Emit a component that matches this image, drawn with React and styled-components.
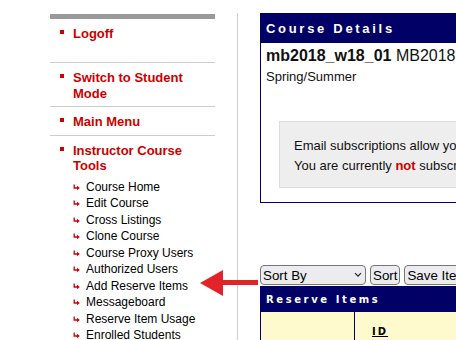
import React from 'react';
import styled, { createGlobalStyle } from 'styled-components';

const Global = createGlobalStyle`
  html, body { margin: 0; padding: 0; background: #fff; overflow: hidden; }
  body { font-family: "Liberation Sans", Arial, sans-serif; width: 456px; height: 340px; }
`;

const Page = styled.div`
  position: relative;
  display: flex;
  align-items: flex-start;
  padding-left: 50px;
  width: 456px;
  height: 340px;
  box-sizing: border-box;
  overflow: hidden;
`;

const Sidebar = styled.nav`
  flex: 0 0 165px;
  margin-top: 14px;
  border-top: 5px solid #999;
`;

const NavItem = styled.div`
  display: flex;
  align-items: flex-start;
  padding: 7px 0 5px 10px;
  border-bottom: ${p => (p.$last ? 'none' : '1px solid #ccc')};
`;

const Square = styled.span`
  flex: 0 0 4px;
  height: 4px;
  margin: 4px 9px 0 0;
  background: #cc0000;
`;

const NavBody = styled.div`
  display: flex;
  flex-direction: column;
`;

const NavLink = styled.a`
  font: bold 13px/15.5px "Liberation Sans", Arial, sans-serif;
  color: #cc0000;
  text-decoration: none;
`;

const Blank = styled.span`
  display: block;
  height: 15.5px;
`;

const SubList = styled.ul`
  list-style: none;
  margin: 5px 0 0;
  padding: 0;
`;

const SubItem = styled.li`
  display: flex;
  align-items: center;
  font: 12px/16.5px "Liberation Sans", Arial, sans-serif;
  color: #000;
  white-space: nowrap;
`;

const SubGlyph = styled.svg`
  flex: 0 0 7px;
  width: 7px;
  height: 7px;
  margin: 1px 6px 0 0;
`;

const Main = styled.main`
  flex: 0 0 auto;
  width: 480px;
  min-height: 340px;
  margin: 13px 0 0 22px;
  padding-left: 22px;
  border-left: 1px solid #ccc;
`;

const CourseBox = styled.section`
  width: 420px;
  border: 1px solid #000066;
`;

const BoxHeader = styled.h2`
  margin: 0;
  height: 29px;
  padding-left: 5px;
  background: #000066;
  color: #fff;
  font: bold 13px/29px "Liberation Sans", Arial, sans-serif;
  letter-spacing: 2.7px;
`;

const BoxBody = styled.div`
  padding: 3px 5px 0;
`;

const Title = styled.div`
  font: 16px/20px "Liberation Sans", Arial, sans-serif;
  color: #111;
  white-space: nowrap;
  b { font-weight: bold; }
`;

const Term = styled.div`
  font: 13px/22px "Liberation Sans", Arial, sans-serif;
  color: #111;
`;

const Redacted = styled.div`
  height: 20px;
`;

const Notice = styled.div`
  margin: 13px 0 14px 13px;
  padding: 14px 14px 11px;
  background: #eeeeee;
  border: 1px solid #dddddd;
  font: 13px/20px "Liberation Sans", Arial, sans-serif;
  color: #111;
  white-space: nowrap;
`;

const Not = styled.b`
  color: #cc0000;
`;

const Toolbar = styled.div`
  display: flex;
  gap: 4px;
  height: 20px;
  margin: 62px 0 1px;
`;

const SelectWrap = styled.div`
  position: relative;
  width: 106px;
  height: 20px;
`;

const Select = styled.select`
  appearance: none;
  width: 100%;
  height: 100%;
  margin: 0;
  padding: 0 0 0 2px;
  border: 1px solid #767676;
  border-radius: 4px;
  background: #ececf0;
  color: #000;
  font: 13.33px "Liberation Sans", Arial, sans-serif;
`;

const Chevron = styled.svg`
  position: absolute;
  right: 4px;
  top: 7px;
  width: 8px;
  height: 6px;
  pointer-events: none;
`;

const Button = styled.button`
  height: 20px;
  margin: 0;
  padding: 0 2px;
  border: 1px solid #767676;
  border-radius: 4px;
  background: #ececf0;
  color: #000;
  font: 13.33px "Liberation Sans", Arial, sans-serif;
  white-space: nowrap;
`;

const ItemsTable = styled.section`
  width: 420px;
  border-left: 1px solid #000066;
`;

const ItemsHeader = styled.h3`
  margin: 0;
  height: 24px;
  padding: 2px 0 0 5px;
  background: #000066;
  color: #fff;
  font: bold 10px/24px "DejaVu Sans", Verdana, sans-serif;
  letter-spacing: 2.6px;
`;

const Row = styled.div`
  display: grid;
  grid-template-columns: 93px 1fr;
  min-height: 40px;
  background: #fffacd;
`;

const Cell = styled.div`
  padding: 9px 0 0 17px;
  border-left: ${p => (p.$divider ? '1px solid #000066' : 'none')};
`;

const ColHead = styled.a`
  font: bold 10px/14px "DejaVu Sans", Verdana, sans-serif;
  letter-spacing: 2px;
  color: #000;
  text-decoration: underline;
`;

const Pointer = styled.svg`
  position: absolute;
  left: 198px;
  top: 268px;
  width: 62px;
  height: 30px;
`;

const tools = [
  'Course Home',
  'Edit Course',
  'Cross Listings',
  'Clone Course',
  'Course Proxy Users',
  'Authorized Users',
  'Add Reserve Items',
  'Messageboard',
  'Reserve Item Usage',
  'Enrolled Students',
];

const HookArrow = () => (
  <SubGlyph viewBox="0 0 7 7">
    <path d="M1.2 0.5 V4 H5" stroke="#cc0000" strokeWidth="1.3" fill="none" />
    <polygon points="4,1.8 6.8,4 4,6.2" fill="#cc0000" />
  </SubGlyph>
);

export default function App() {
  return (
    <>
      <Global />
      <Page>
        <Sidebar>
          <NavItem>
            <Square />
            <NavBody>
              <NavLink href="#">Logoff</NavLink>
              <Blank />
            </NavBody>
          </NavItem>
          <NavItem>
            <Square />
            <NavBody>
              <NavLink href="#">Switch to Student<br />Mode</NavLink>
            </NavBody>
          </NavItem>
          <NavItem>
            <Square />
            <NavBody>
              <NavLink href="#">Main Menu</NavLink>
            </NavBody>
          </NavItem>
          <NavItem $last>
            <Square />
            <NavBody>
              <NavLink href="#">Instructor Course<br />Tools</NavLink>
              <SubList>
                {tools.map(t => (
                  <SubItem key={t}>
                    <HookArrow />
                    {t}
                  </SubItem>
                ))}
              </SubList>
            </NavBody>
          </NavItem>
        </Sidebar>

        <Main>
          <CourseBox>
            <BoxHeader>Course Details</BoxHeader>
            <BoxBody>
              <Title><b>mb2018_w18_01</b> MB2018 Course Reserves</Title>
              <Term>Spring/Summer</Term>
              <Redacted />
              <Notice>
                Email subscriptions allow you to receive notifications
                <br />
                You are currently <Not>not</Not> subscribed to this course.
              </Notice>
            </BoxBody>
          </CourseBox>

          <Toolbar>
            <SelectWrap>
              <Select defaultValue="sort">
                <option value="sort">Sort By</option>
                <option value="title">Title</option>
              </Select>
              <Chevron viewBox="0 0 8 6">
                <path d="M1 1.2 L4 4.2 L7 1.2" stroke="#222" strokeWidth="1.2" fill="none" />
              </Chevron>
            </SelectWrap>
            <Button>Sort</Button>
            <Button>Save Item Order</Button>
          </Toolbar>

          <ItemsTable>
            <ItemsHeader>Reserve Items</ItemsHeader>
            <Row>
              <Cell />
              <Cell $divider>
                <ColHead href="#">ID</ColHead>
              </Cell>
            </Row>
          </ItemsTable>
        </Main>

        <Pointer viewBox="0 0 62 30">
          <rect x="24" y="12" width="36" height="5" fill="#e3232a" />
          <polygon points="2,15 25,2 25,28" fill="#e3232a" />
        </Pointer>
      </Page>
    </>
  );
}
